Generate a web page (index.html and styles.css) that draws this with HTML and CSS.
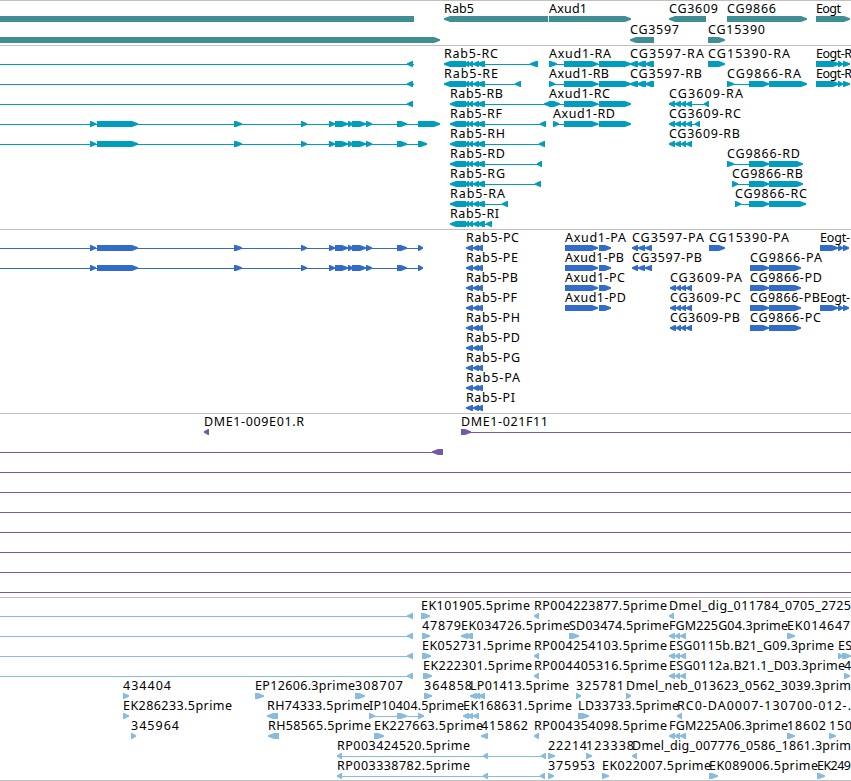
FILE: index.html
```html
<!DOCTYPE html>
<html lang="en">
<head>
<meta charset="utf-8">
<title>Genome tracks</title>
<link rel="stylesheet" href="styles.css">
</head>
<body>
<main class="browser" id="browser"></main>
<script src="tracks.js"></script>
</body>
</html>
```
FILE: styles.css
```css
body { margin: 0; background: #fff; }
.browser { display: flex; flex-direction: column; width: 851px; height: 781px; overflow: hidden; }
.track { box-sizing: border-box; height: 184px; border-top: 1px solid #bfbfbf; padding-top: 1px; display: flex; flex-direction: column; }
.track.genes { height: 45px; }
.track.reads { border-bottom: 1px solid #bfbfbf; }
.row { display: block; flex: none; width: 851px; height: 20px; overflow: visible; }
.genes .row { height: 21px; }
.row text { font: 12.5px "Noto Sans", "DejaVu Sans", sans-serif; fill: #000; }
.genes .shape { fill: #3f8e94; }
.transcripts .shape { fill: #009dbf; }
.proteins .shape { fill: #316ccb; }
.clones .shape { fill: #7757a8; }
.reads .shape { fill: #87bcde; }
```
FILE: tracks.js
```js
// Glyphs: b = block, l = connector, r / a = arrow pointing right / left,
// t = label (start, end, text). Each row is a semicolon separated list.
const exons = 'r 90 96;r 97 138;r 234 242;r 301 307;r 329 335;r 335 348;r 348 353;r 352 366;r 366 372;r 397 407;';
const rabTail = 'a 465 469;a 468 473;a 473 479;a 477 485;';
const rab = (end, w) => 'a 450 466;' + rabTail + `l 466 ${end};a ${end - w} ${end};`;
const rabP = 'a 466 473;a 469 473;a 473 479;a 476 483;';
const axud = 'r 564 598;r 599 631;l 598 600;';
const axudP = 'r 565 598;r 599 611;';
const cg3597 = 'a 630 638;a 637 646;a 645 654;';
const cg3597P = 'a 632 638;a 638 645;a 645 652;';
const cg3609 = 'a 669 675;a 675 681;a 681 686;a 686 692;';
const cg3609P = 'a 670 676;a 676 681;a 681 686;a 686 692;';
const cg9866P = 'r 750 769;r 769 801;';
const eogt = 't 816 852 Eogt-R;r 816 839;r 838 843;r 843 850;';
const eogtP = 't 820 850 Eogt-;r 820 838;r 838 843;r 843 849;';
const three = 'a 669 675;a 675 680;a 680 686;';
const left = 'l 0 413;a 407 413;';

const tracks = [
  ['genes', [
    'b 0 414;t 444 474 Rab5;a 444 548;t 549 587 Axud1;r 549 631;t 669 718 CG3609;a 669 706;t 727 776 CG9866;r 727 807;t 816 841 Eogt;r 816 850',
    'r 0 440;t 630 679 CG3597;a 630 654;t 708 765 CG15390;r 708 725'
  ]],
  ['transcripts', [
    'l 0 414;a 407 413;t 444 498 Rab5-RC;a 444 466;' + rabTail + 'l 466 538;a 530 538;t 549 611 Axud1-RA;r 549 557;l 549 566;' + axud + 't 630 704 CG3597-RA;' + cg3597 + 't 708 790 CG15390-RA;r 708 725;' + eogt,
    'l 0 414;a 407 413;t 444 498 Rab5-RE;a 444 466;' + rabTail + 'l 466 521;a 515 521;t 549 609 Axud1-RB;r 549 555;l 549 566;' + axud + 't 630 702 CG3597-RB;' + cg3597 + 't 727 801 CG9866-RA;r 727 734;l 727 750;r 749 769;r 769 807;' + eogt,
    left + 't 450 503 Rab5-RB;a 450 466;' + rabTail + 'l 466 546;t 549 610 Axud1-RC;a 544 553;r 549 560;l 555 566;' + axud + 't 669 743 CG3609-RA;' + cg3609 + 'l 690 709;a 704 709',
    'l 0 438;' + exons + 'r 418 440;t 450 502 Rab5-RF;' + rab(546, 6) + 't 553 615 Axud1-RD;r 553 559;l 553 566;' + axud + 't 669 741 CG3609-RC;' + cg3609 + 'l 690 700;a 695 700',
    'l 0 420;' + exons + 'r 418 427;t 450 505 Rab5-RH;' + rab(545, 6) + 't 669 740 CG3609-RB;' + cg3609,
    't 450 505 Rab5-RD;' + rab(542, 5) + 't 727 800 CG9866-RD;r 727 734;l 727 750;r 749 769;r 769 803',
    't 450 505 Rab5-RG;' + rab(541, 6) + 't 732 803 CG9866-RB;r 732 738;l 732 750;r 749 769;r 769 803',
    't 450 505 Rab5-RA;' + rab(508, 6) + 't 735 807 CG9866-RC;r 735 741;l 735 750;r 749 769;r 769 806',
    't 450 499 Rab5-RI;' + rab(492, 6)
  ]],
  ['proteins', [
    'l 0 420;' + exons + 'r 418 423;t 466 519 Rab5-PC;' + rabP + 't 565 626 Axud1-PA;' + axudP + 't 632 704 CG3597-PA;' + cg3597P + 't 709 789 CG15390-PA;r 709 725;' + eogtP,
    'l 0 420;' + exons + 'r 418 423;t 466 518 Rab5-PE;' + rabP + 't 565 624 Axud1-PB;' + axudP + 't 632 702 CG3597-PB;' + cg3597P + 't 750 822 CG9866-PA;' + cg9866P,
    't 466 518 Rab5-PB;' + rabP + 't 565 625 Axud1-PC;' + axudP + 't 670 742 CG3609-PA;' + cg3609P + 't 750 822 CG9866-PD;' + cg9866P,
    't 466 517 Rab5-PF;' + rabP + 't 565 626 Axud1-PD;' + axudP + 't 670 741 CG3609-PC;' + cg3609P + 't 750 820 CG9866-PB;' + cg9866P + eogtP,
    't 466 520 Rab5-PH;' + rabP + 't 670 740 CG3609-PB;' + cg3609P + 't 750 821 CG9866-PC;' + cg9866P,
    't 466 520 Rab5-PD;' + rabP,
    't 466 520 Rab5-PG;' + rabP,
    't 466 520 Rab5-PA;' + rabP,
    't 466 515 Rab5-PI;' + rabP
  ]],
  ['clones', [
    't 204 304 DME1-009E01.R;a 204 209;t 461 548 DME1-021F11;r 461 471;l 468 851',
    'l 0 440;a 432 443',
    'l 0 851', 'l 0 851', 'l 0 851', 'l 0 851', 'l 0 851', 'l 0 851', 'l 0 851'
  ]],
  ['reads', [
    left + 't 421 530 EK101905.5prime;r 421 430;t 534 667 RP004223877.5prime;a 534 539;t 669 851 Dmel_dig_011784_0705_2725;a 669 674',
    left + 't 422 461 47879;r 422 430;t 461 570 EK034726.5prime;a 461 468;a 465 473;t 569 669 SD03474.5prime;r 569 579;t 669 788 FGM225G04.3prime;' + three + 't 787 850 EK014647;r 787 795',
    left + 't 422 531 EK052731.5prime;r 422 431;t 534 667 RP004254103.5prime;a 534 539;t 669 834 ESG0115b.B21_G09.3prime;' + three + 't 838 852 ES;r 838 843;r 842 851',
    left + 't 423 532 EK222301.5prime;r 423 432;t 534 667 RP004405316.5prime;a 534 539;t 669 845 ESG0112a.B21.1_D03.3prime;' + three + 't 844 852 4;r 844 850',
    't 123 171 434404;r 123 129;t 255 355 EP12606.3prime;r 255 264;t 355 403 308707;r 355 365;t 424 472 364858;r 424 432;t 470 569 LP01413.5prime;a 470 477;a 474 480;a 478 485;t 576 624 325781;r 576 581;t 626 851 Dmel_neb_013623_0562_3039.3prim;r 626 631',
    't 123 232 EK286233.5prime;r 123 129;t 267 370 RH74333.5prime;a 267 278;t 369 464 IP10404.5prime;r 369 375;l 369 423;r 397 407;r 418 424;t 463 572 EK168631.5prime;a 463 469;a 467 473;a 473 479;t 578 679 LD33733.5prime;r 578 589;t 677 851 RC0-DA0007-130700-012-.;a 677 682',
    't 131 179 345964;r 131 136;t 268 371 RH58565.5prime;a 268 279;t 374 483 EK227663.5prime;r 374 384;t 481 528 415862;a 481 488;t 534 667 RP004354098.5prime;a 534 539;t 669 788 FGM225A06.3prime;' + three + 't 787 826 18602;r 787 795;t 829 852 150;r 829 836',
    't 337 470 RP003424520.5prime;l 337 546;a 337 342;a 483 488;a 541 546;t 548 587 22214;r 548 555;t 586 634 123338;r 586 592;t 632 851 Dmel_dig_007776_0586_1861.3prim;a 632 637',
    't 337 470 RP003338782.5prime;l 337 545;a 337 342;a 483 488;a 540 545;t 548 595 375953;r 548 554;t 602 711 EK022007.5prime;r 602 609;t 709 818 EK089006.5prime;r 709 718;t 817 851 EK249;r 817 825'
  ]]
];

function glyph(item) {
  const [kind, a, b, label] = item.split(' ');
  const x = +a, end = +b, w = end - x;
  if (kind === 't') return `<text x="${x}" y="11" textLength="${w}">${label}</text>`;
  if (kind === 'l') return `<rect class="shape" x="${x}" y="17" width="${w}" height="1"/>`;
  if (kind === 'b') return `<rect class="shape" x="${x}" y="14" width="${w}" height="6"/>`;
  const tip = Math.min(w - 1, 6);
  const px = n => kind === 'r' ? x + n : end - n;
  const pts = [[0, 14], [w - tip, 14], [w, 16.3], [w, 17.7], [w - tip, 20], [0, 20]];
  return `<polygon class="shape" points="${pts.map(p => px(p[0]) + ',' + p[1]).join(' ')}"/>`;
}

document.getElementById('browser').innerHTML = tracks.map(([name, rows]) =>
  `<section class="track ${name}">` + rows.map(row =>
    `<svg class="row">${row.split(';').filter(Boolean).map(glyph).join('')}</svg>`).join('') +
  '</section>').join('');
```
